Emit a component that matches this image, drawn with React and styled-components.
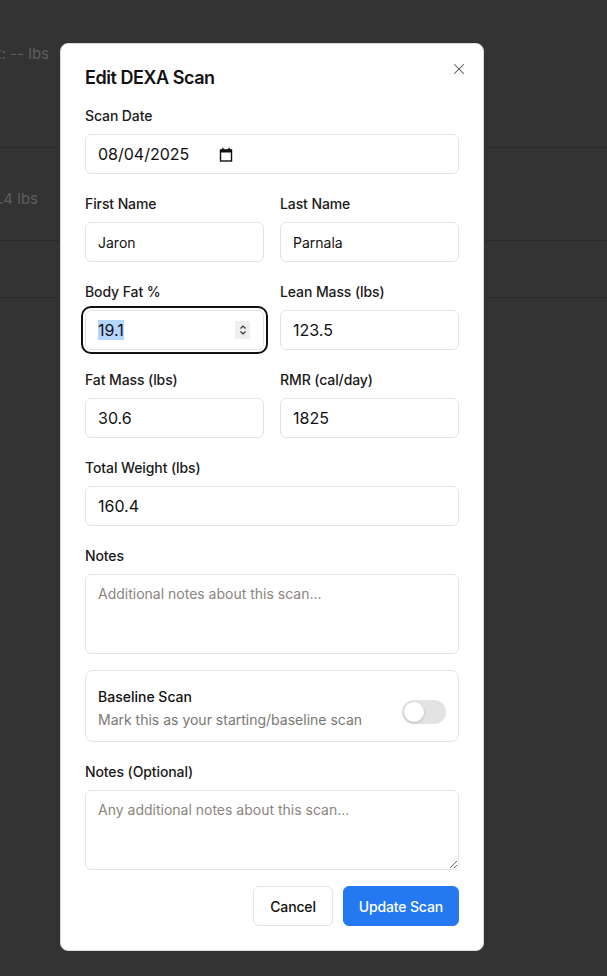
import React, { useState } from 'react';
import styled, { createGlobalStyle } from 'styled-components';
import { X } from 'lucide-react';

const GlobalStyle = createGlobalStyle`
  * { box-sizing: border-box; }
  body {
    margin: 0;
    background: #333333;
    font-family: Inter, "Noto Sans", sans-serif;
    -webkit-font-smoothing: antialiased;
  }
`;

const CalendarIcon = () => (
  <svg width="14" height="15" viewBox="0 0 14 15" aria-hidden="true">
    <rect x="1.5" y="3" width="11" height="11" fill="none" stroke="#111" strokeWidth="1.4" />
    <rect x="1" y="2.5" width="12" height="3" fill="#111" />
    <rect x="3.2" y="0.8" width="1.4" height="2.5" fill="#111" />
    <rect x="9.4" y="0.8" width="1.4" height="2.5" fill="#111" />
  </svg>
);

const SpinIcon = () => (
  <svg width="8" height="12" viewBox="0 0 8 12" aria-hidden="true">
    <path d="M1.5 4.5 L4 2 L6.5 4.5" fill="none" stroke="#333" strokeWidth="1.2" />
    <path d="M1.5 7.5 L4 10 L6.5 7.5" fill="none" stroke="#333" strokeWidth="1.2" />
  </svg>
);

const App = () => {
  const [firstName, setFirstName] = useState('Jaron');
  const [lastName, setLastName] = useState('Parnala');
  const [lean, setLean] = useState('123.5');
  const [fat, setFat] = useState('30.6');
  const [rmr, setRmr] = useState('1825');
  const [weight, setWeight] = useState('160.4');
  const [baseline, setBaseline] = useState(false);

  return (
    <>
      <GlobalStyle />
      <Page>
        <BgRow $h={148} $pad={44}>
          <ClipText $w={49}>Total Weight: -- lbs</ClipText>
        </BgRow>
        <BgRow $h={93} $pad={41}>
          <ClipText $w={38}>Total Weight: 160.4 lbs</ClipText>
        </BgRow>
        <BgRow $h={57} $pad={0} />
      </Page>

      <Overlay>
        <Modal>
          <CloseButton aria-label="Close">
            <X size={18} strokeWidth={1.4} color="#555" />
          </CloseButton>
          <Title>Edit DEXA Scan</Title>

          <Field>
            <Label>Scan Date</Label>
            <FakeInput $size={16}>
              <span>08/04/2025</span>
              <DateIcon><CalendarIcon /></DateIcon>
            </FakeInput>
          </Field>

          <Grid>
            <Field>
              <Label>First Name</Label>
              <Input $size={14} value={firstName} onChange={(e) => setFirstName(e.target.value)} />
            </Field>
            <Field>
              <Label>Last Name</Label>
              <Input $size={14} value={lastName} onChange={(e) => setLastName(e.target.value)} />
            </Field>

            <Field>
              <Label>Body Fat %</Label>
              <FocusedInput $size={16}>
                <Selected>19.1</Selected>
                <Spinner><SpinIcon /></Spinner>
              </FocusedInput>
            </Field>
            <Field>
              <Label>Lean Mass (lbs)</Label>
              <Input $size={16} value={lean} onChange={(e) => setLean(e.target.value)} />
            </Field>

            <Field>
              <Label>Fat Mass (lbs)</Label>
              <Input $size={16} value={fat} onChange={(e) => setFat(e.target.value)} />
            </Field>
            <Field>
              <Label>RMR (cal/day)</Label>
              <Input $size={16} value={rmr} onChange={(e) => setRmr(e.target.value)} />
            </Field>
          </Grid>

          <Field>
            <Label>Total Weight (lbs)</Label>
            <Input $size={16} value={weight} onChange={(e) => setWeight(e.target.value)} />
          </Field>

          <Field $mb={16}>
            <Label>Notes</Label>
            <TextArea $resize="none" placeholder="Additional notes about this scan..." />
          </Field>

          <BaselineBox>
            <div>
              <BoxTitle>Baseline Scan</BoxTitle>
              <BoxSub>Mark this as your starting/baseline scan</BoxSub>
            </div>
            <Switch
              role="switch"
              aria-checked={baseline}
              $on={baseline}
              onClick={() => setBaseline(!baseline)}
            >
              <Knob $on={baseline} />
            </Switch>
          </BaselineBox>

          <Field $mb={16}>
            <Label>Notes (Optional)</Label>
            <TextArea $resize="vertical" placeholder="Any additional notes about this scan..." />
          </Field>

          <Footer>
            <Button>Cancel</Button>
            <Button $primary>Update Scan</Button>
          </Footer>
        </Modal>
      </Overlay>
    </>
  );
};

const Page = styled.div`
  min-height: 100vh;
  background: #333333;
`;

const BgRow = styled.div`
  height: ${(p) => p.$h}px;
  padding-top: ${(p) => p.$pad}px;
  border-bottom: 1px solid #2b2b2b;
`;

const ClipText = styled.div`
  width: ${(p) => p.$w}px;
  display: flex;
  justify-content: flex-end;
  overflow: hidden;
  white-space: nowrap;
  font-size: 15px;
  line-height: 20px;
  color: #5e5e5e;
`;

const Overlay = styled.div`
  position: fixed;
  inset: 0;
  padding: 43px 0 0 60px;
  display: flex;
  align-items: flex-start;
`;

const Modal = styled.div`
  position: relative;
  width: 424px;
  background: #fff;
  border: 1px solid #d9d9d9;
  border-radius: 8px;
  padding: 24px;
`;

const CloseButton = styled.button`
  position: absolute;
  top: 16px;
  right: 15px;
  width: 18px;
  height: 18px;
  padding: 0;
  border: none;
  background: transparent;
  display: flex;
  align-items: center;
  justify-content: center;
  cursor: pointer;
`;

const Title = styled.h2`
  margin: 0 0 18px;
  font-size: 18px;
  line-height: 20px;
  font-weight: 600;
  color: #111;
  letter-spacing: -0.45px;
`;

const Grid = styled.div`
  display: grid;
  grid-template-columns: 1fr 1fr;
  column-gap: 16px;
`;

const Field = styled.div`
  margin-bottom: ${(p) => (p.$mb !== undefined ? p.$mb : 20)}px;
`;

const Label = styled.label`
  display: block;
  font-size: 14px;
  line-height: 20px;
  font-weight: 500;
  color: #1a1a1a;
  letter-spacing: -0.1px;
  margin-bottom: 8px;
`;

const Input = styled.input`
  display: block;
  width: 100%;
  height: 40px;
  padding: 0 12px;
  border: 1px solid #e3e3e3;
  border-radius: 6px;
  font-family: Inter, "Noto Sans", sans-serif;
  font-size: ${(p) => p.$size}px;
  color: #111;
  background: #fff;
  outline: none;
`;

const FakeInput = styled.div`
  display: flex;
  align-items: center;
  height: 40px;
  padding: 0 12px;
  border: 1px solid #e3e3e3;
  border-radius: 6px;
  font-size: ${(p) => p.$size}px;
  color: #111;
`;

const DateIcon = styled.span`
  display: flex;
  margin-left: 30px;
`;

const FocusedInput = styled(FakeInput)`
  outline: 2px solid #111;
  outline-offset: 2px;
  border-radius: 6px;
  justify-content: space-between;
`;

const Selected = styled.span`
  background: #b4d5fe;
  line-height: 20px;
`;

const Spinner = styled.span`
  display: flex;
  align-items: center;
  justify-content: center;
  width: 15px;
  height: 18px;
  background: #efefef;
  margin-right: 1px;
`;

const TextArea = styled.textarea`
  display: block;
  width: 100%;
  height: 80px;
  padding: 9px 12px;
  border: 1px solid #e3e3e3;
  border-radius: 6px;
  font-family: Inter, "Noto Sans", sans-serif;
  font-size: 14px;
  line-height: 20px;
  color: #111;
  resize: ${(p) => p.$resize};
  outline: none;
  &::placeholder {
    color: #8a8580;
  }
`;

const BaselineBox = styled.div`
  display: flex;
  align-items: center;
  justify-content: space-between;
  height: 72px;
  padding: 0 12px;
  border: 1px solid #e3e3e3;
  border-radius: 8px;
  margin-bottom: 20px;
`;

const BoxTitle = styled.div`
  font-size: 14px;
  line-height: 20px;
  font-weight: 500;
  color: #111;
  margin-top: 4px;
`;

const BoxSub = styled.div`
  font-size: 14px;
  line-height: 20px;
  color: #7b7773;
  margin-top: 3px;
`;

const Switch = styled.button`
  position: relative;
  width: 44px;
  height: 24px;
  padding: 0;
  border: none;
  border-radius: 12px;
  background: ${(p) => (p.$on ? '#2479f0' : '#e4e3e2')};
  cursor: pointer;
  margin-top: 12px;
`;

const Knob = styled.span`
  position: absolute;
  top: 2px;
  left: ${(p) => (p.$on ? 22 : 2)}px;
  width: 20px;
  height: 20px;
  border-radius: 50%;
  background: #fff;
  box-shadow: 0 1px 3px rgba(0, 0, 0, 0.18);
`;

const Footer = styled.div`
  display: flex;
  justify-content: flex-end;
  gap: 10px;
`;

const Button = styled.button`
  height: 40px;
  padding: 0 ${(p) => (p.$primary ? 15 : 16)}px;
  border-radius: 6px;
  border: 1px solid ${(p) => (p.$primary ? '#2479f0' : '#e3e3e3')};
  background: ${(p) => (p.$primary ? '#2479f0' : '#fff')};
  color: ${(p) => (p.$primary ? '#fff' : '#111')};
  font-family: Inter, "Noto Sans", sans-serif;
  font-size: 14px;
  font-weight: 500;
  letter-spacing: -0.15px;
  cursor: pointer;
`;

export default App;
